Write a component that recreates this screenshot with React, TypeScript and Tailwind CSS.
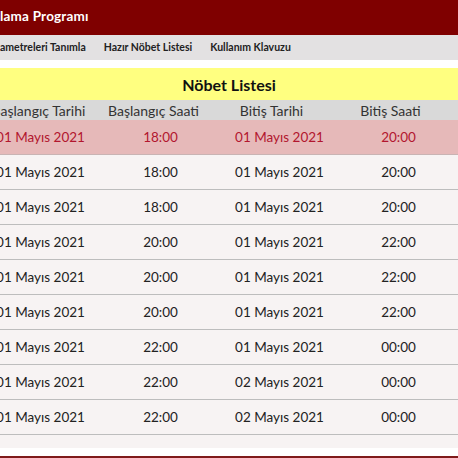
import React from 'react';

const rows = [
  ['01 Mayıs 2021', '18:00', '01 Mayıs 2021', '20:00'],
  ['01 Mayıs 2021', '18:00', '01 Mayıs 2021', '20:00'],
  ['01 Mayıs 2021', '18:00', '01 Mayıs 2021', '20:00'],
  ['01 Mayıs 2021', '20:00', '01 Mayıs 2021', '22:00'],
  ['01 Mayıs 2021', '20:00', '01 Mayıs 2021', '22:00'],
  ['01 Mayıs 2021', '20:00', '01 Mayıs 2021', '22:00'],
  ['01 Mayıs 2021', '22:00', '01 Mayıs 2021', '00:00'],
  ['01 Mayıs 2021', '22:00', '02 Mayıs 2021', '00:00'],
  ['01 Mayıs 2021', '22:00', '02 Mayıs 2021', '00:00'],
];

function App() {
  return (
    <div className="w-[458px] h-[458px] overflow-hidden bg-white flex flex-col font-['Lato',sans-serif]">
      <div className="h-[35px] shrink-0 bg-[#7f0000] flex items-center">
        <h1 className="text-white font-bold text-[13.5px] tracking-[0.2px] pb-[2px]">lama Programı</h1>
      </div>
      <div className="h-[25px] shrink-0 bg-[#e3e1e2] flex items-center text-[10.5px] font-bold text-[#222]">
        <span>ametreleri Tanımla</span>
        <span className="ml-[18px]">Hazır Nöbet Listesi</span>
        <span className="ml-[18px]">Kullanım Klavuzu</span>
      </div>
      <div className="h-[8px] shrink-0" />
      <div className="h-[32px] shrink-0 bg-[#ffff80] flex items-center justify-center">
        <h2 className="font-bold text-[16px] text-[#111] pt-[2px]">Nöbet Listesi</h2>
      </div>
      <div className="h-[20px] shrink-0 bg-[#d9d9d9] grid grid-cols-[119px_119px_119px_119px] ml-[-18px] items-center text-[14px] text-[#333]">
        <span className="text-center pr-[6px]">Başlangıç Tarihi</span>
        <span className="text-center pr-[14px]">Başlangıç Saati</span>
        <span className="text-center pr-[16px]">Bitiş Tarihi</span>
        <span className="text-center pr-[16px]">Bitiş Saati</span>
      </div>
      <div className="flex flex-col bg-[#f7f3f3]">
        {rows.map((r, i) => (
          <div
            key={i}
            className={
              i === 0
                ? 'h-[35px] grid grid-cols-[119px_119px_119px_119px] ml-[-18px] items-center text-[13.5px] bg-[#e6b9b9] text-[#b2162e] border-b border-[#c9b3b3]'
                : 'h-[35px] grid grid-cols-[119px_119px_119px_119px] ml-[-18px] items-center text-[13.5px] text-[#222] border-b border-[#bdbdbd]'
            }
          >
            <span className="text-center pr-[2px]">{r[0]}</span>
            <span className="text-center">{r[1]}</span>
            <span className="text-center">{r[2]}</span>
            <span className="text-center">{r[3]}</span>
          </div>
        ))}
        <div className="h-[13px]" />
      </div>
      <div className="flex-1" />
      <div className="h-[2px] shrink-0 bg-[#7f1a1a]" />
    </div>
  );
}

export default App;
